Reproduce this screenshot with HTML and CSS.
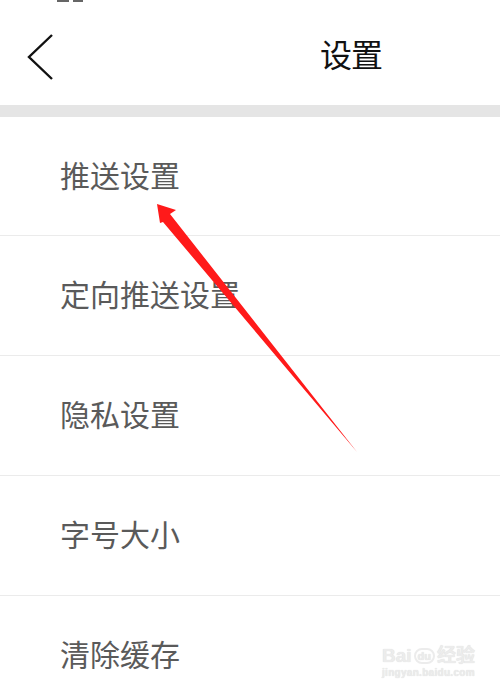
FILE: index.html
```html
<!DOCTYPE html>
<html lang="zh">
<head>
<meta charset="utf-8">
<title>设置</title>
<link rel="stylesheet" href="styles.css">
</head>
<body>
<div class="screen">
  <div class="status"><span class="frag"></span><span class="frag frag2"></span></div>
  <header class="topbar">
    <svg class="back" width="30" height="50" viewBox="0 0 30 50"><polyline points="25,2 2,24 25,46" fill="none" stroke="#111" stroke-width="2.4"/></svg>
    <h1 class="title">设置</h1>
  </header>
  <div class="band"></div>
  <ul class="list">
    <li class="item">推送设置</li>
    <li class="item">定向推送设置</li>
    <li class="item">隐私设置</li>
    <li class="item">字号大小</li>
    <li class="item">清除缓存</li>
  </ul>
  <svg class="arrow" width="500" height="693" viewBox="0 0 500 693">
    <polygon points="157,204 176,210 170,214 357,452 163,222 160,223" fill="#ff1a1a"/>
  </svg>
  <div class="watermark">
    <div class="wm-top"><span>Bai</span><span class="paw">du</span><span>经验</span></div>
    <div class="wm-url">jingyan.baidu.com</div>
  </div>
</div>
</body>
</html>
```

FILE: styles.css
```css
html, body {
  margin: 0;
  padding: 0;
  background: #fff;
}
.screen {
  position: relative;
  width: 500px;
  height: 693px;
  overflow: hidden;
  font-family: "Noto Sans CJK SC", "Noto Sans", sans-serif;
}
.status {
  height: 3px;
  display: flex;
  gap: 4px;
  padding-left: 57px;
}
.frag {
  width: 12px;
  height: 2px;
  background: #666;
}
.frag2 {
  width: 10px;
}
.topbar {
  height: 102px;
  display: flex;
  align-items: center;
  position: relative;
  box-sizing: border-box;
}
.back {
  margin-left: 27px;
  margin-top: 8px;
}
.title {
  position: absolute;
  left: 320px;
  top: 30px;
  margin: 0;
  font-size: 32px;
  font-weight: 400;
  color: #111;
  line-height: 40px;
  letter-spacing: -1px;
}
.band {
  height: 12px;
  background: #e5e5e5;
}
.list {
  list-style: none;
  margin: 0;
  padding: 0;
}
.item {
  border-bottom: 1px solid #ebebeb;
  display: flex;
  align-items: center;
  padding-left: 60px;
  padding-bottom: 5px;
  font-size: 30px;
  line-height: 30px;
  color: #5a5a5a;
  box-sizing: border-box;
  height: 120px;
}
.item:first-child {
  height: 119px;
}
.arrow {
  position: absolute;
  left: 0;
  top: 0;
}
.watermark {
  position: absolute;
  left: 382px;
  top: 645px;
  color: #ececec;
  text-shadow: 0 0 1px #d6d6d6;
  font-family: "Liberation Sans", "Noto Sans CJK SC", sans-serif;
  font-weight: 700;
}
.wm-top {
  display: flex;
  align-items: flex-end;
  gap: 2px;
  font-size: 19px;
  line-height: 22px;
}
.paw {
  font-size: 11px;
  border: 2px solid #ececec;
  border-radius: 8px;
  padding: 0 2px;
  line-height: 12px;
  margin-bottom: 3px;
}
.wm-url {
  font-size: 10px;
  line-height: 12px;
  letter-spacing: 0.3px;
}
```
